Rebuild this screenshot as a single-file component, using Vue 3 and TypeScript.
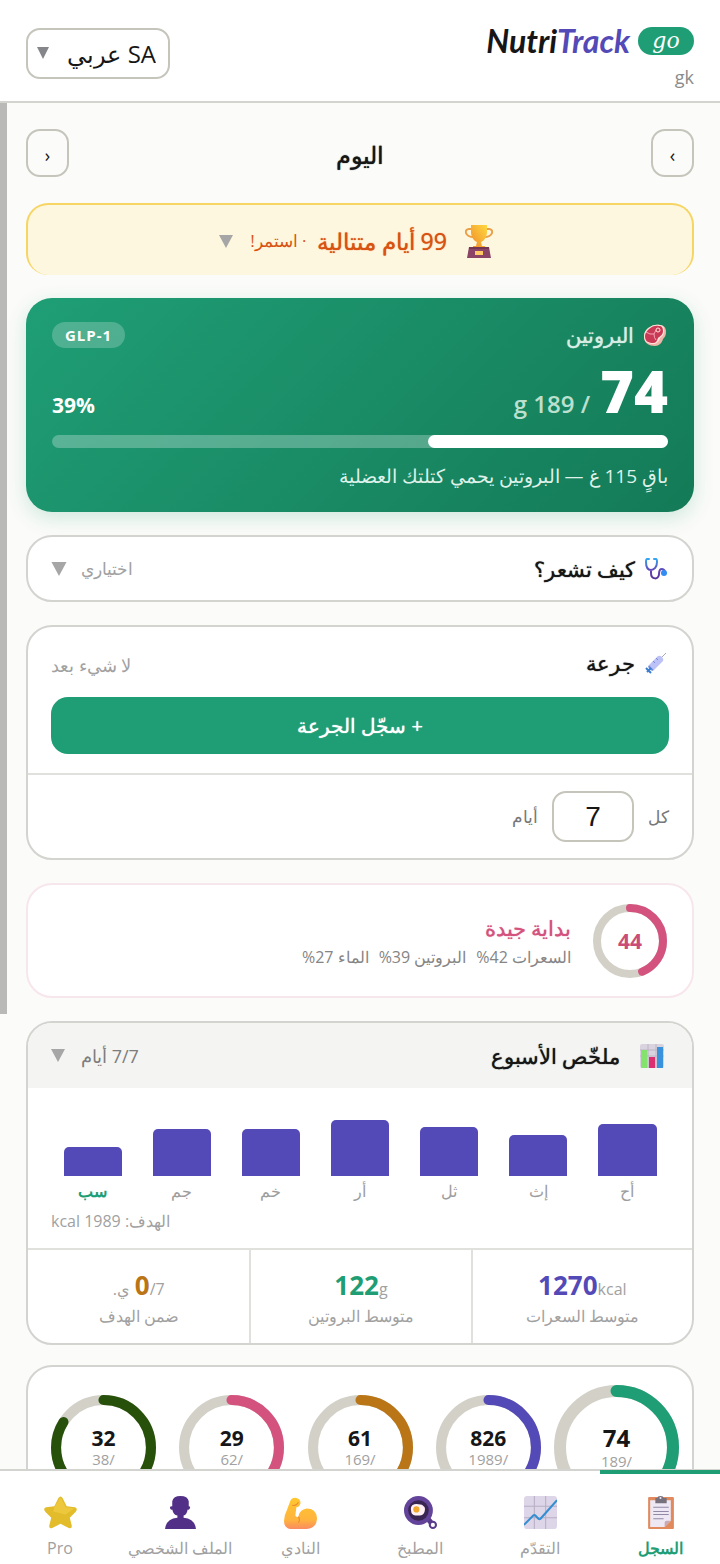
<script setup lang="ts">
import { ref } from 'vue'

interface Day { label: string; height: number; today?: boolean }
interface Ring { value: number; goal: number; color: string; lead?: boolean }
interface Stat { value: string; unit: string; suffix?: string; label: string; tone: string }
interface Tab { id: string; label: string }

const language = ref('ar')
const interval = ref('7')
const activeTab = ref('log')

const days: Day[] = [
  { label: 'أح', height: 52 },
  { label: 'إث', height: 41 },
  { label: 'ثل', height: 49 },
  { label: 'أر', height: 56 },
  { label: 'خم', height: 47 },
  { label: 'جم', height: 47 },
  { label: 'سب', height: 29, today: true },
]

const stats: Stat[] = [
  { value: '1270', unit: 'kcal', label: 'متوسط السعرات', tone: 'violet' },
  { value: '122', unit: 'g', label: 'متوسط البروتين', tone: 'green' },
  { value: '0', unit: '/7', suffix: 'ي.', label: 'ضمن الهدف', tone: 'amber' },
]

const rings: Ring[] = [
  { value: 74, goal: 189, color: '#1f9e75', lead: true },
  { value: 826, goal: 1989, color: '#534ab7' },
  { value: 61, goal: 169, color: '#ba7517' },
  { value: 29, goal: 62, color: '#d4537e' },
  { value: 32, goal: 38, color: '#27500a' },
]

const tabs: Tab[] = [
  { id: 'log', label: 'السجل' },
  { id: 'progress', label: 'التقدّم' },
  { id: 'kitchen', label: 'المطبخ' },
  { id: 'gym', label: 'النادي' },
  { id: 'profile', label: 'الملف الشخصي' },
  { id: 'pro', label: 'Pro' },
]

const percent = (ring: Ring): number => Math.round((ring.value / ring.goal) * 100)
</script>

<template>
  <div class="app" dir="rtl" lang="ar">
    <header class="topbar">
      <div class="brand">
        <div class="brand-row">
          <span class="pill">go</span>
          <span class="wordmark" dir="ltr">Nutri<span class="wordmark-accent">Track</span></span>
        </div>
        <span class="user">gk</span>
      </div>
      <div class="language">
        <select v-model="language" class="language-select" aria-label="اللغة">
          <option value="ar">SA عربي</option>
          <option value="en">US English</option>
        </select>
        <svg class="language-arrow" viewBox="0 0 12 12" aria-hidden="true"><path d="M0 0h12L6 12z" fill="#85868a" /></svg>
      </div>
    </header>

    <div class="viewport">
      <main class="content">
        <div class="date-row">
          <button class="step" type="button" aria-label="اليوم السابق">›</button>
          <h1 class="date">اليوم</h1>
          <button class="step" type="button" aria-label="اليوم التالي">‹</button>
        </div>

        <button class="streak" type="button">
          <svg class="trophy" viewBox="0 0 28 34" aria-hidden="true">
            <defs>
              <linearGradient id="cup" x1="0" y1="1" x2="1" y2="0"><stop offset="0" stop-color="#ef8b2c" /><stop offset="1" stop-color="#ffd83e" /></linearGradient>
            </defs>
            <path d="M7 5H4a3 3 0 0 0-3 4c1 3 4 4 8 4M21 5h3a3 3 0 0 1 3 4c-1 3-4 4-8 4" fill="none" stroke="#e9a046" stroke-width="2" />
            <path d="M6 1h16v7c0 5-3 9-6 10l1 4h3v2H8v-2h3l1-4C9 17 6 13 6 8z" fill="url(#cup)" />
            <path d="M4 23h20l2 11H2z" fill="#8a4566" />
            <path d="M4 23h20v2H4z" fill="#743550" />
            <rect x="10" y="27" width="8" height="4" fill="#ffc866" />
          </svg>
          <strong class="streak-title">99 أيام متتالية</strong>
          <span class="streak-note">· استمر!</span>
          <svg class="arrow" viewBox="0 0 14 13" aria-hidden="true"><path d="M0 0h14L7 13z" /></svg>
        </button>

        <section class="protein">
          <div class="row">
            <h2 class="protein-title">
              <svg class="icon-s" viewBox="0 0 22 22" aria-hidden="true">
                <path d="M5 4C8 1 12 0 16 1c4 0 6 3 6 7 0 3-1 5-3 7-1 4-4 7-8 7-6 0-11-3-11-9 0-4 2-7 5-9z" fill="#eeb6a8" />
                <path d="M4 4c4-3 8-4 12-3 3 0 5 3 4 7 0 3-2 4-4 6-1 4-4 6-7 6-5 0-9-2-9-8 0-4 2-6 4-8z" fill="#ffe3d8" />
                <path d="M5 5c3-3 7-4 10-3 3 0 4 2 4 5 0 4-3 5-5 7-1 3-2 5-5 5-5 0-8-2-8-7 0-3 2-5 4-7z" fill="#c93a57" />
                <path d="M2 8q4 3 8 2l2-4M10 10q0 4 2 6" fill="none" stroke="#f5a6b4" />
                <circle cx="14" cy="6" r="2" fill="#c93a57" stroke="#ffe3d8" />
              </svg>
              البروتين
            </h2>
            <span class="glp">GLP-1</span>
          </div>
          <div class="protein-values">
            <div class="protein-pair"><strong class="protein-now">74</strong><span class="protein-goal">/ 189 g</span></div>
            <span class="protein-percent">39%</span>
          </div>
          <div class="track"><div class="track-fill" :style="{ width: '39%' }"></div></div>
          <p class="protein-note">باقٍ 115 غ — البروتين يحمي كتلتك العضلية</p>
        </section>

        <button class="card feel" type="button">
          <span class="card-title">
            <svg class="icon-s" viewBox="0 0 22 22" aria-hidden="true">
              <defs><linearGradient id="tube" x1="0" y1="0" x2="0" y2="1"><stop offset="0" stop-color="#33a6f2" /><stop offset="0.6" stop-color="#6543b5" /><stop offset="1" stop-color="#58329a" /></linearGradient></defs>
              <path d="M4 1H2Q1 1 1 4c0 5 2 8 5 8s6-3 6-8q0-3-1-3H9M6 12v3c0 7 8 7 8 1 0-8 6-5 6-1" fill="none" stroke="url(#tube)" stroke-width="2" stroke-linecap="round" />
              <circle cx="19" cy="15" r="3" fill="#338bf5" />
            </svg>
            كيف تشعر؟
          </span>
          <span class="card-side">اختياري
            <svg class="arrow arrow-l" viewBox="0 0 14 13" aria-hidden="true"><path d="M0 0h14L7 13z" /></svg>
          </span>
        </button>

        <section class="card dose">
          <div class="dose-top">
            <div class="row">
              <h2 class="card-title">
                <svg class="icon-s" viewBox="0 0 22 22" aria-hidden="true">
                  <path d="M15 7l6-6" stroke="#a9a8b6" />
                  <path d="M4 13l9-9q2-1 4 1t1 4l-9 9z" fill="#bcc2f5" />
                  <path d="M4 13l5 5-2 1-4-4z" fill="#7389dd" />
                  <path d="M8 9l2 2M11 6l2 2" stroke="#768be0" />
                  <path d="M1 16l5 5M2 20l4-4" stroke="#397ed0" stroke-width="2" />
                </svg>
                جرعة
              </h2>
              <span class="dose-empty">لا شيء بعد</span>
            </div>
            <button class="dose-button" type="button">+ سجّل الجرعة</button>
          </div>
          <div class="dose-interval">
            <label for="interval">كل</label>
            <input id="interval" v-model="interval" class="interval-input" type="text" inputmode="numeric" />
            <span>أيام</span>
          </div>
        </section>

        <section class="card score">
          <div class="score-ring">
            <svg viewBox="0 0 74 74" aria-hidden="true">
              <circle cx="37" cy="37" r="33" fill="none" stroke="#d3d1c7" stroke-width="8" />
              <circle cx="37" cy="37" r="33" fill="none" stroke="#d4537e" stroke-width="8" stroke-linecap="round" pathLength="100" stroke-dasharray="44 100" transform="rotate(-90 37 37)" />
            </svg>
            <strong class="score-value">44</strong>
          </div>
          <div>
            <h2 class="score-title">بداية جيدة</h2>
            <p class="score-parts"><span>السعرات 42%</span><span>البروتين 39%</span><span>الماء 27%</span></p>
          </div>
        </section>

        <section class="card week">
          <button class="week-head" type="button">
            <span class="week-title">
              <svg class="chart-icon" viewBox="0 0 24 24" aria-hidden="true">
                <rect width="24" height="24" rx="2" fill="#d9d3df" />
                <path d="M0 6h24M0 12h24M8 0v24M16 0v24" stroke="#bdb4c6" />
                <rect x="1" y="6" width="6" height="18" fill="#83e36c" />
                <rect x="9" y="13" width="6" height="11" fill="#dc2f70" />
                <rect x="17" y="3" width="6" height="21" fill="#3a91dc" />
              </svg>
              ملخّص الأسبوع
            </span>
            <span class="week-side">7/7 أيام
              <svg class="arrow" viewBox="0 0 14 13" aria-hidden="true"><path d="M0 0h14L7 13z" /></svg>
            </span>
          </button>
          <div class="chart">
            <div class="bars">
              <div v-for="day in days" :key="day.label" class="day">
                <div class="bar" :style="{ height: day.height + 'px' }"></div>
                <span class="day-label" :class="{ today: day.today }">{{ day.label }}</span>
              </div>
            </div>
            <p class="goal">الهدف: 1989 kcal</p>
          </div>
          <div class="stats">
            <div v-for="stat in stats" :key="stat.label" class="stat">
              <div class="stat-line">
                <span class="stat-number" dir="ltr"><strong class="stat-value" :class="stat.tone">{{ stat.value }}</strong><span>{{ stat.unit }}</span></span>
                <span v-if="stat.suffix">{{ stat.suffix }}</span>
              </div>
              <div class="stat-label">{{ stat.label }}</div>
            </div>
          </div>
        </section>

        <section class="card rings">
          <div v-for="ring in rings" :key="ring.goal" class="ring" :class="{ lead: ring.lead }">
            <svg viewBox="0 0 104 104" aria-hidden="true">
              <circle cx="52" cy="52" r="47" fill="none" stroke="#d3d1c7" stroke-width="10" />
              <circle cx="52" cy="52" r="47" fill="none" :stroke="ring.color" stroke-width="10" stroke-linecap="round" pathLength="100" :stroke-dasharray="percent(ring) + ' 100'" transform="rotate(-90 52 52)" />
            </svg>
            <div class="ring-text">
              <strong class="ring-value">{{ ring.value }}</strong>
              <span class="ring-goal">/{{ ring.goal }}</span>
            </div>
          </div>
        </section>
      </main>
      <div class="scroll-thumb"></div>
    </div>

    <nav class="tabs">
      <button v-for="tab in tabs" :key="tab.id" class="tab" :class="{ active: tab.id === activeTab }" type="button" @click="activeTab = tab.id">
        <svg v-if="tab.id === 'log'" class="tab-icon" viewBox="0 0 32 32" aria-hidden="true">
          <rect x="4" y="1" width="25" height="31" rx="1" fill="#e08a5d" />
          <path d="M6 4h20v20l-6 6H6z" fill="#eee8f5" />
          <path d="M26 24l-6 6v-4q0-2 2-2z" fill="#c9a9b4" />
          <path d="M11 2h2q0-2 3-2t3 2h3v5H11z" fill="#77717d" />
          <circle cx="16" cy="2" r="1" fill="#eee8f5" />
          <path d="M9 11h15M9 15h15M9 18h15M9 22h10" stroke="#9189a5" />
        </svg>
        <svg v-else-if="tab.id === 'progress'" class="tab-icon" viewBox="0 0 32 32" aria-hidden="true">
          <rect width="32" height="32" rx="3" fill="#ddd5e8" />
          <path d="M0 10h32M0 21h32M10 0v32M21 0v32" stroke="#b9aec3" />
          <path d="M0 28l9-9q1-1 2 0l3 3q1 1 2 0L32 4" fill="none" stroke="#348fd2" stroke-width="2" />
        </svg>
        <svg v-else-if="tab.id === 'kitchen'" class="tab-icon" viewBox="0 0 32 32" aria-hidden="true">
          <path d="M23 22l5 6" stroke="#593b8b" stroke-width="5" stroke-linecap="round" />
          <circle cx="28" cy="28" r="4" fill="#593b8b" /><circle cx="28" cy="28" r="2" fill="#fff" />
          <circle cx="14" cy="14" r="14" fill="#63449a" /><circle cx="14" cy="14" r="10" fill="#392552" />
          <path d="M8 9q3-2 6-1 4 0 5 2 2 1 1 5-1 4-5 4h-4q-4-1-4-4-1-4 1-6z" fill="#fff1f3" />
          <circle cx="12" cy="13" r="3" fill="#f1a62d" />
        </svg>
        <svg v-else-if="tab.id === 'gym'" class="tab-icon" viewBox="0 0 32 32" aria-hidden="true">
          <defs><linearGradient id="arm" x1="0" y1="0" x2="0" y2="1"><stop offset="0" stop-color="#ffc72e" /><stop offset="0.7" stop-color="#ffb43d" /><stop offset="1" stop-color="#fa8b62" /></linearGradient></defs>
          <path d="M6 5q2-4 6-3 4 1 4 5-1 4-4 4l-1 8q1 2 3 1 1-7 8-8 9 0 10 9 0 10-10 11H6q-6-1-6-8 0-5 3-11z" fill="url(#arm)" />
          <path d="M14 20q2 3 0 6M8 9q4 1 6-3" fill="none" stroke="#ed8b32" />
        </svg>
        <svg v-else-if="tab.id === 'profile'" class="tab-icon" viewBox="0 0 32 32" aria-hidden="true">
          <path d="M8 5q1-5 8-5t8 5v5q2 0 1 2-1 2-2 1-1 5-4 6v2q11 1 12 11H1Q2 22 13 21v-2q-4-1-5-6-1 1-2-1-1-2 2-2z" fill="#533087" />
        </svg>
        <svg v-else class="tab-icon" viewBox="0 0 32 32" aria-hidden="true">
          <path d="M14 2q2-3 4 0l4 8 8 1q3 1 1 4l-6 6 2 8q0 3-3 2l-8-4-8 4q-3 1-3-2l2-8-6-6q-2-3 1-4l8-1z" fill="#e3bc2b" />
          <path d="M15 3q1-2 2 0l4 8 8 1-8 6-12-3 1-4z" fill="#eec83c" />
        </svg>
        <span>{{ tab.label }}</span>
      </button>
    </nav>
  </div>
</template>

<style>
html, body { margin: 0; }
</style>

<style scoped>
.app {
  display: flex;
  flex-direction: column;
  height: 100vh;
  overflow: hidden;
  background: #fbfbf9;
  color: #161616;
  font-family: "Open Sans", "Noto Sans", sans-serif;
  font-size: 18px;
  line-height: 24px;
}
.app *, .app *::before { box-sizing: border-box; }
button, input, select { font: inherit; color: inherit; }
button { cursor: pointer; }
h1, h2, p { margin: 0; font-weight: 500; }
svg { display: block; flex: none; }

.topbar {
  display: flex;
  justify-content: space-between;
  align-items: flex-start;
  padding: 26px 26px 12px;
  background: #fff;
  border-bottom: 2px solid #d3d3d0;
}
.brand-row { display: flex; align-items: center; gap: 8px; height: 29px; }
.pill {
  width: 56px;
  height: 28px;
  border-radius: 14px;
  background: #1f9e75;
  color: #fff;
  font: italic 22px/28px "DejaVu Serif", "Liberation Serif", serif;
  text-align: center;
}
.wordmark { font: italic 700 32px/32px Lato, sans-serif; }
.wordmark-accent { color: #534ab7; }
.user { display: block; margin-top: 10px; color: #8b8b8b; }
.language { position: relative; margin-top: 2px; }
.language-select {
  display: block;
  width: 144px;
  height: 51px;
  padding: 0 12px 0 30px;
  border: 2px solid #c6c5bc;
  border-radius: 14px;
  background: #fff;
  font-size: 24px;
  line-height: 44px;
  appearance: none;
}
.language-arrow { position: absolute; left: 11px; top: 19px; width: 12px; height: 12px; }

.viewport { position: relative; flex: 1; min-height: 0; }
.content {
  display: flex;
  flex-direction: column;
  height: 100%;
  padding: 26px 26px 40px;
  overflow-y: auto;
  scrollbar-width: none;
}
.content > * { flex: none; }
.scroll-thumb { position: absolute; left: 0; top: 0; width: 7px; height: calc(200% / 3); background: #b9b9b8; }

.row { display: flex; justify-content: space-between; align-items: center; }
.date-row { display: flex; justify-content: space-between; align-items: center; margin-bottom: 26px; }
.date { padding-top: 4px; font-size: 24px; line-height: 32px; }
.date, .streak-title, .protein-title, .card-title, .dose-button, .score-title, .week-title { text-shadow: 0 0 1px currentColor; }
.step {
  width: 43px;
  height: 48px;
  padding: 4px 0 0;
  border: 2px solid #c6c5bc;
  border-radius: 14px;
  background: transparent;
}
.streak {
  display: flex;
  justify-content: center;
  align-items: center;
  gap: 10px;
  height: 72px;
  margin-bottom: 23px;
  padding: 2px 8px 0 0;
  border: 2px solid #f6d565;
  border-bottom: 0;
  border-radius: 22px;
  background: #fef7df;
  color: #d85312;
}
.trophy { width: 28px; height: 34px; margin-left: 8px; }
.streak-title { font-size: 23px; font-weight: 500; }
.streak-note { font-size: 17px; }
.arrow { width: 14px; height: 13px; fill: #a6a6a6; }
.arrow-l { width: 16px; height: 14px; }
.streak .arrow { margin-right: 7px; }

.protein {
  margin-bottom: 23px;
  padding: 22px 26px 21px;
  border-radius: 26px;
  background: linear-gradient(135deg, #1f9e75, #147a57);
  box-shadow: 0 6px 20px rgba(31, 158, 117, 0.2);
  color: #fff;
}
.protein-title { display: flex; align-items: center; gap: 10px; color: #d5ede4; font-size: 21px; line-height: 30px; }
.icon-s { width: 22px; height: 22px; margin-right: 2px; }
.glp { padding: 0 13px; border-radius: 14px; background: rgba(255, 255, 255, 0.22); font-size: 15px; font-weight: 700; line-height: 26px; letter-spacing: 1px; }
.protein-values { display: flex; justify-content: space-between; align-items: baseline; height: 64px; margin-top: 9px; line-height: 64px; }
.protein-pair { display: flex; align-items: baseline; gap: 10px; }
.protein-now { font-size: 58px; font-weight: 800; }
.protein-goal { color: #bce0d0; font-size: 24px; font-weight: 600; }
.protein-percent { font-size: 21px; font-weight: 700; }
.track { height: 13px; margin-top: 12px; border-radius: 7px; background: rgba(255, 255, 255, 0.27); }
.track-fill { height: 100%; border-radius: 7px; background: #fff; }
.protein-note { margin-top: 13px; color: #dff1e9; font-size: 19px; font-weight: 400; line-height: 30px; }

.card { margin-bottom: 23px; border: 2px solid #d3d3d0; border-radius: 26px; background: #fff; }
.card-title { display: flex; align-items: center; gap: 10px; font-size: 21px; font-weight: 500; line-height: 32px; }
.card-side, .week-side { display: flex; align-items: center; gap: 14px; color: #a1a1a1; font-size: 17px; }
.feel { display: flex; justify-content: space-between; align-items: center; height: 67px; padding: 0 23px; }
.dose-top { padding: 20px 23px 19px; }
.dose-empty { padding-top: 4px; color: #a1a1a1; }
.dose-button {
  display: block;
  width: 100%;
  height: 57px;
  margin-top: 18px;
  border: 0;
  border-radius: 17px;
  background: #1f9e75;
  color: #fff;
  font-size: 20px;
  font-weight: 500;
}
.dose-interval { display: flex; align-items: center; gap: 14px; padding: 16px 23px; border-top: 2px solid #e0e0dc; color: #777; font-size: 17px; }
.interval-input { width: 82px; height: 51px; border: 2px solid #c6c5bc; border-radius: 14px; background: #fff; color: #161616; font-family: "Liberation Sans", sans-serif; font-size: 28px; text-align: center; }

.score { display: flex; align-items: center; gap: 22px; min-height: 115px; padding: 0 25px; border-color: #f8e6ed; }
.score-ring { display: grid; place-items: center; width: 74px; height: 74px; }
.score-ring svg, .score-value { grid-area: 1 / 1; }
.score-ring svg { width: 74px; height: 74px; }
.score-value { color: #c94d77; font-size: 21px; }
.score-title { color: #d4537e; font-size: 21px; line-height: 32px; }
.score-parts { display: flex; gap: 10px; color: #858585; font-size: 16px; font-weight: 400; line-height: 26px; }

.week { margin-bottom: 20px; overflow: hidden; }
.week-head { display: flex; justify-content: space-between; align-items: center; width: 100%; height: 65px; padding: 0 23px; border: 0; background: #f4f4f2; }
.week-title { display: flex; align-items: center; gap: 20px; font-size: 21px; font-weight: 500; }
.chart-icon { width: 24px; height: 24px; margin-right: 5px; }
.week-side { gap: 16px; color: #7d7d7d; font-size: 18px; }
.chart { padding: 24px 23px 15px; }
.bars { display: flex; align-items: flex-end; gap: 6px; height: 91px; }
.day { display: flex; flex: 1; flex-direction: column; align-items: center; }
.bar { width: 70%; border-radius: 5px 5px 0 0; background: #534ab7; }
.day-label { margin-top: 3px; color: #9d9d9d; font-size: 16px; line-height: 24px; }
.today { color: #1f9e75; font-weight: 700; }
.goal { margin-top: 6px; color: #a1a1a1; font-size: 16px; font-weight: 400; line-height: 24px; text-align: left; }
.stats { display: grid; grid-template-columns: repeat(3, 1fr); border-top: 2px solid #e0e0dc; }
.stat { padding: 17px 0 14px; color: #a1a1a1; font-size: 16px; text-align: center; }
.stat:not(:last-child) { border-left: 2px solid #e0e0dc; }
.stat-line { display: flex; justify-content: center; align-items: baseline; gap: 5px; height: 36px; line-height: 36px; }
.stat-value { font-size: 26px; }
.stat-label { line-height: 26px; }
.violet { color: #534ab7; }
.green { color: #1f9e75; }
.amber { color: #ba7517; }

.rings { display: flex; justify-content: space-between; align-items: center; padding: 18px 23px; }
.ring { display: grid; place-items: center; width: 105px; }
.ring svg, .ring-text { grid-area: 1 / 1; }
.ring svg { width: 105px; height: 105px; }
.ring-text { display: flex; flex-direction: column; align-items: center; }
.ring-value { font-size: 21px; line-height: 22px; }
.ring-goal { color: #a1a1a1; font-size: 15px; line-height: 20px; }
.lead { width: 125px; margin: 0 -10px; }
.lead svg { width: 125px; height: 125px; }
.lead .ring-value { font-size: 24px; line-height: 26px; }

.tabs { display: grid; grid-template-columns: repeat(6, 1fr); height: 95px; border-top: 2px solid #d3d3d0; background: #fff; }
.tab { position: relative; display: flex; flex-direction: column; align-items: center; gap: 7px; padding: 25px 0 0; border: 0; background: none; color: #a1a1a1; font-size: 16px; white-space: nowrap; }
.tab-icon { width: 33px; height: 33px; }
.active { color: #1f9e75; font-weight: 600; }
.active::before { content: ""; position: absolute; inset: -1px 0 auto; height: 4px; background: #1f9e75; }
</style>
